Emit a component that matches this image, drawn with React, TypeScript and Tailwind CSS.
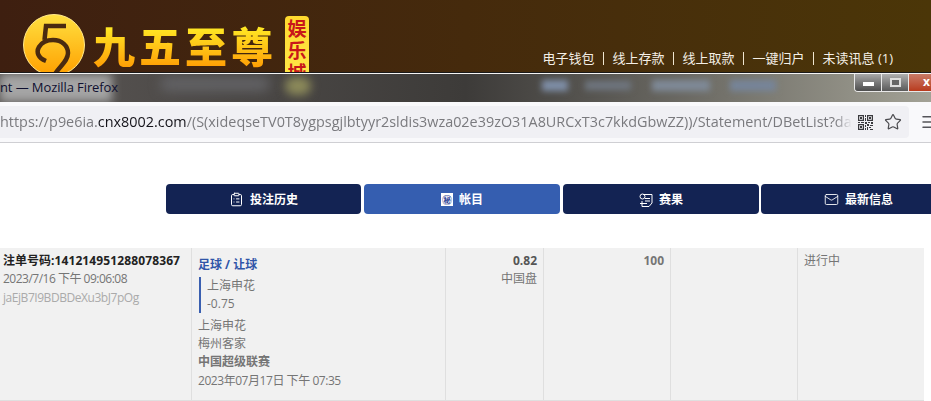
import { ClipboardList, Mail, Menu, Star } from "lucide-react";

const font = "font-['Open_Sans','Noto_Sans_CJK_SC',sans-serif]";

const links = ["电子钱包", "线上存款", "线上取款", "一键归户", "未读讯息 (1)"];

function Logo() {
  return (
    <svg width="64" height="58" viewBox="0 0 64 58" className="mt-[14px] ml-[22px] shrink-0">
      <defs>
        <linearGradient id="coin" x1="0" y1="0" x2="0" y2="1">
          <stop offset="0" stopColor="#ffe040" />
          <stop offset="1" stopColor="#ffa000" />
        </linearGradient>
      </defs>
      <circle cx="32" cy="31" r="30.5" fill="url(#coin)" stroke="#ffe88a" strokeWidth="1" />
      <path
        d="M44 12H24L22.5 26M24 47C16 44 14 38 17 33C20 28 26 26 31 26C40 26 46 32 46 39C46 47 38 52 33 60"
        fill="none"
        stroke="#4a2a10"
        strokeWidth="4.5"
      />
    </svg>
  );
}

function QrIcon() {
  return (
    <svg width="15" height="15" viewBox="0 0 15 15" fill="#3a3a3e" className="ml-[6px] shrink-0">
      <path d="M0 0h6v6H0zM1.2 1.2v3.6h3.6V1.2zM9 0h6v6H9zM10.2 1.2v3.6h3.6V1.2zM0 9h6v6H0zM1.2 10.2v3.6h3.6v-3.6z" fillRule="evenodd" />
      <path d="M2 2h2v2H2zM11 2h2v2h-2zM2 11h2v2H2zM7 0h1v2H7zM7 3h1v3H7zM0 7h2v1H0zM3 7h3v1H3zM7 7h2v2H7zM10 7h2v1h-2zM13 7h2v2h-2zM7 10h1v2H7zM9 9h2v2H9zM12 10h3v1h-3zM9 12h1v3H9zM7 13h1v2H7zM11 12h2v1h-2zM12 14h3v1h-3z" />
    </svg>
  );
}

function ResultsIcon() {
  return (
    <svg width="14" height="16" viewBox="0 0 14 16" fill="none" stroke="white" strokeWidth="1">
      <path d="M4 2.5H13V11L10 14.5H3V9" />
      <circle cx="3.5" cy="4.5" r="2.5" />
      <path d="M6 6.5H11M6 9H11M1 11.5H8" />
    </svg>
  );
}

function StatementIcon() {
  return (
    <span className="flex h-[13px] w-[12px] items-center justify-center bg-white text-[10px] font-bold leading-none text-[#34489a]">
      ㊙
    </span>
  );
}

function Tab({ label, icon, active, className }: { label: string; icon: React.ReactNode; active?: boolean; className?: string }) {
  return (
    <div
      className={`flex h-[30px] shrink-0 items-center justify-center gap-[6px] rounded-[4px] pt-px text-[12px] font-bold text-white ${
        active ? "bg-[#355eb0]" : "bg-[#132353]"
      } ${className}`}
    >
      {icon}
      <span>{label}</span>
    </div>
  );
}

export default function App() {
  return (
    <div className={`h-[401px] w-[931px] overflow-hidden bg-white ${font}`}>
      {/* site header */}
      <header className="flex h-[72px] overflow-hidden bg-gradient-to-r from-[#3e1f10] via-[#452a0c] to-[#4b3608]">
        <Logo />
        <div className="ml-[7px] mt-[21px] flex gap-[4px] bg-gradient-to-b from-[#fff428] to-[#ff9500] bg-clip-text font-['Noto_Sans_CJK_SC',sans-serif] text-[42px] font-black leading-[48px] text-transparent">
          <span>九</span>
          <span>五</span>
          <span>至</span>
          <span>尊</span>
        </div>
        <div className="ml-[12px] mt-[16px] flex h-[70px] w-[24px] shrink-0 flex-col items-center rounded-[4px] bg-gradient-to-b from-[#ffd92e] to-[#ffe94a] pt-[1px] font-['Noto_Sans_CJK_SC',sans-serif] text-[19px] font-bold leading-[22px] text-[#c8171a]">
          <span>娱</span>
          <span>乐</span>
          <span>城</span>
        </div>
        <nav className="ml-auto mr-[38px] flex items-end pb-[5px] text-[13px] leading-[18px] text-[#f4efe6]">
          {links.map((l, i) => (
            <span key={l} className="flex items-center">
              {i > 0 && <span className="mx-[8.5px] h-[13px] w-px bg-[#f0e6d0]" />}
              {l}
            </span>
          ))}
        </nav>
      </header>

      {/* firefox title bar */}
      <div className="h-px bg-[#1a1a1a]" />
      <div className="h-px bg-[#f4f4f4]" />
      <div className="relative flex h-[28px] items-center overflow-hidden bg-gradient-to-r from-[#5a5654] via-[#3d3b39] to-[#a3a296]">
        <div className="absolute left-0 top-0 h-full w-[112px] bg-[#a5a5a5] blur-[5px]" />
        <div className="absolute left-[160px] top-[3px] h-[14px] w-[110px] rounded-full bg-[#636366] blur-[6px]" />
        <div className="absolute left-[285px] top-[3px] h-[18px] w-[26px] rounded-full bg-[#8c8a5a] blur-[5px]" />
        <div className="absolute left-[542px] top-[6px] h-[11px] w-[26px] bg-[#7f8fa8] blur-[3px]" />
        <div className="absolute left-[585px] top-[7px] h-[9px] w-[46px] bg-[#6f7680] blur-[3px]" />
        <div className="absolute left-[652px] top-[6px] h-[11px] w-[58px] bg-[#7f8a98] blur-[3px]" />
        <div className="absolute left-[730px] top-[6px] h-[11px] w-[46px] bg-[#76859a] blur-[3px]" />
        <span className="relative -mt-[2px] text-[13px] leading-[18px] tracking-[-0.1px] text-[#101030]">nt — Mozilla Firefox</span>
        <div className="absolute right-0 top-0 flex h-[18px] w-[77px] overflow-hidden rounded-bl-[4px] border-b border-l border-[#e8e8e8]">
          <div className="flex w-[27px] items-center justify-center border-r border-[#e8e8e8] bg-gradient-to-b from-[#a8a8a8] to-[#4e4e4e]">
            <span className="mt-[3px] h-[4px] w-[11px] bg-white" />
          </div>
          <div className="flex w-[27px] items-center justify-center border-r border-[#e8e8e8] bg-gradient-to-b from-[#b0b0b0] to-[#5a5a5a]">
            <span className="h-[9px] w-[11px] border-2 border-[#dddddd] bg-[#666666]" />
          </div>
          <div className="flex-1 bg-gradient-to-b from-[#c97a66] to-[#b83a1c] text-[12px] font-bold leading-[16px] text-white">
            <span className="pl-[14px]">x</span>
          </div>
        </div>
      </div>

      {/* url bar */}
      <div className="flex h-[41px] items-center border-b border-[#cfcfd3] bg-[#f9f9fb]">
        <div className="flex h-[32px] w-[909px] shrink-0 items-center rounded-r-[4px] bg-[#f0f0f4]">
          <div className="w-[852px] shrink-0 overflow-hidden whitespace-nowrap text-[14.4px] leading-[20px] text-[#7a7a7e] [mask-image:linear-gradient(to_right,black_98%,transparent)]">
            https://p9e6ia.<span className="text-[#15141a]">cnx8002.com</span>
            /(S(xideqseTV0T8ygpsgjlbtyyr2sldis3wza02e39zO31A8URCxT3c7kkdGbwZZ))/Statement/DBetList?dateFrom
          </div>
          <QrIcon />
          <Star size={18} strokeWidth={1.6} className="ml-[11px] text-[#4a4a4e]" />
        </div>
        <Menu size={18} className="ml-[11px] shrink-0 text-[#55555a]" />
      </div>

      {/* tabs */}
      <div className="flex gap-[3px] pl-[166px] pt-[41px]">
        <Tab label="投注历史" icon={<ClipboardList size={15} strokeWidth={1.6} />} className="w-[195px]" />
        <Tab label="帐目" icon={<StatementIcon />} active className="w-[196px]" />
        <Tab label="赛果" icon={<ResultsIcon />} className="w-[196px]" />
        <Tab label="最新信息" icon={<Mail size={15} strokeWidth={1.4} />} className="-ml-px w-[195px] gap-[5px]" />
      </div>

      {/* bet row */}
      <div className="mt-[34px] grid h-[153px] w-[924px] grid-cols-[192px_254px_98px_127px_127px_126px] border-b border-[#dfdfdf] bg-[#f1f1f1] text-[12px] text-[#757575]">
        <div className="border-r border-[#dfdfdf] pl-[3px] pt-[4px] leading-[18px]">
          <div className="font-bold text-[#222222]">
            注单号码:<span className="tracking-[0.12px]">141214951288078367</span>
          </div>
          <div className="tracking-[-0.5px]">2023/7/16 下午 09:06:08</div>
          <div className="mt-px tracking-[-0.45px] text-[#aaaaaa]">jaEjB7I9BDBDeXu3bJ7pOg</div>
        </div>
        <div className="border-r border-[#dfdfdf] pl-[6px] pt-[8px] leading-[18px]">
          <div className="font-bold text-[#2f55a8]">足球 / 让球</div>
          <div className="mb-[4px] ml-px mt-[3px] border-l-2 border-[#3a5fb0] pl-[6px]">
            <div>上海申花</div>
            <div>-0.75</div>
          </div>
          <div>上海申花</div>
          <div>梅州客家</div>
          <div className="font-bold">中国超级联赛</div>
          <div className="mt-px tracking-[-0.45px]">2023年07月17日 下午 07:35</div>
        </div>
        <div className="border-r border-[#dfdfdf] pr-[6px] pt-[4px] text-right leading-[18px]">
          <div className="font-bold text-[#555555]">0.82</div>
          <div>中国盘</div>
        </div>
        <div className="border-r border-[#dfdfdf] pr-[6px] pt-[4px] text-right font-bold leading-[18px]">100</div>
        <div className="border-r border-[#dfdfdf]" />
        <div className="pl-[6px] pt-[4px] leading-[18px]">进行中</div>
      </div>
    </div>
  );
}
